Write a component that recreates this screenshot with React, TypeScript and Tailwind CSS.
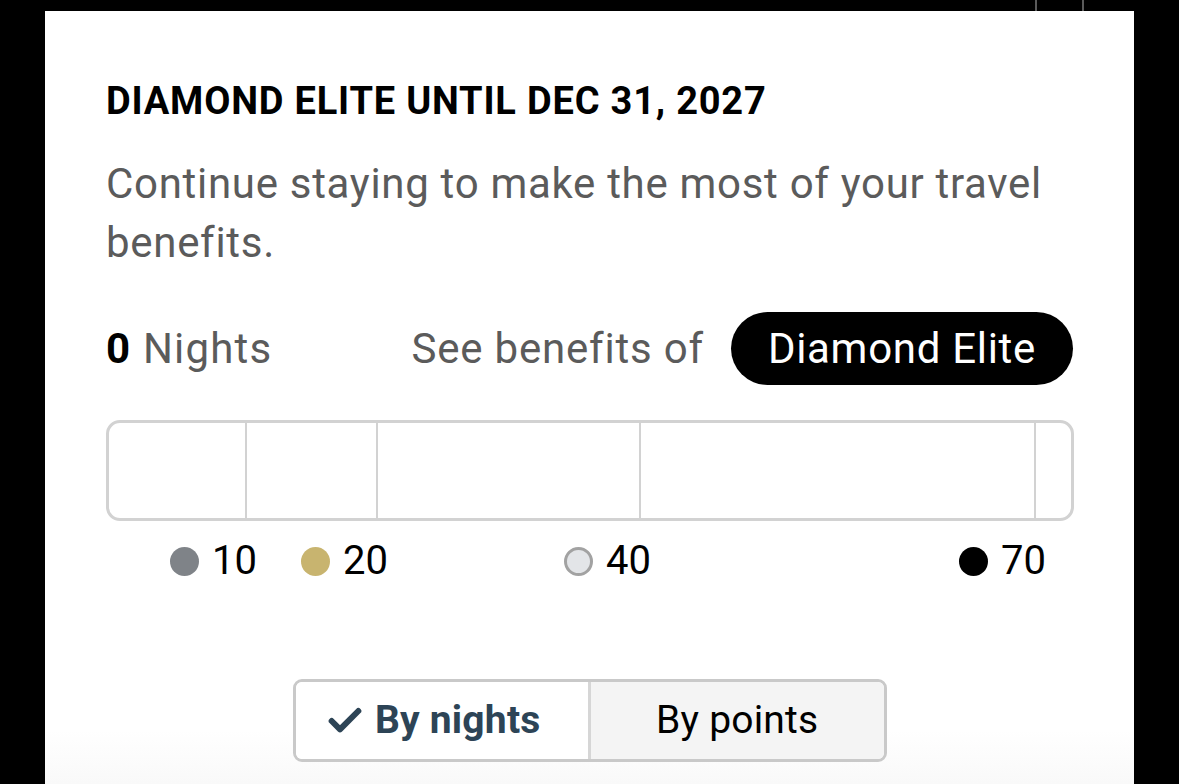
import { Check } from 'lucide-react'

const font = { fontFamily: 'Roboto, "Noto Sans", sans-serif' }

// marks on the progress bar, in px from the bar's inner left edge
const segments = [
  { width: 138, value: 10, dot: 'bg-[#7f8388]' },
  { width: 131, value: 20, dot: 'bg-[#c8b46f]' },
  { width: 263, value: 40, dot: 'bg-[#e3e5e8] border-[3px] border-[#a2a2a2]' },
  { width: 395, value: 70, dot: 'bg-black' },
]

export default function App() {
  return (
    <div className="flex h-[784px] w-[1179px] flex-col overflow-hidden bg-black" style={font}>
      {/* edge of the element behind the card */}
      <div className="flex h-[11px] shrink-0">
        <div className="w-[1035px]" />
        <div className="h-full w-[2px] bg-[#5a5a5a]" />
        <div className="w-[45px]" />
        <div className="h-full w-[2px] bg-[#5a5a5a]" />
      </div>

      <div className="ml-[45px] flex w-[1089px] flex-1 flex-col bg-gradient-to-b from-white from-[93%] to-[#f9f9f9] px-[61px] pt-[73px]">
        <h2 className="text-[38px] font-bold uppercase leading-[34px] tracking-[0.8px] text-black">
          Diamond Elite until Dec 31, 2027
        </h2>
        <p className="mt-[36px] pr-[10px] text-[42px] leading-[59px] tracking-[0.7px] text-[#5b5b5b]">
          Continue staying to make the most of your travel benefits.
        </p>

        <div className="mt-[40px] flex items-center justify-between">
          <div className="text-[42px] tracking-[1.2px] text-[#5b5b5b]">
            <span className="font-bold text-black">0</span> Nights
          </div>
          <div className="flex items-center gap-[27px]">
            <span className="text-[42px] tracking-[0.8px] text-[#5b5b5b]">See benefits of</span>
            <span className="flex h-[73px] items-center rounded-full bg-black px-[37px] text-[42px] tracking-[0.7px] text-white">
              Diamond Elite
            </span>
          </div>
        </div>

        {/* progress bar */}
        <div className="mt-[35px] flex h-[101px] w-[968px] rounded-[14px] border-[3px] border-[#d2d2d2]">
          {segments.map(s => (
            <div key={s.value} className="h-full shrink-0 border-r-2 border-[#d2d2d2]" style={{ width: s.width }} />
          ))}
        </div>

        {/* legend */}
        <div className="mt-[20px] flex">
          {segments.map(s => (
            <div key={s.value} className="flex shrink-0 justify-end" style={{ width: s.width }}>
              <div className="-mr-[13px] flex items-center gap-[13px] text-[40px] leading-[40px] text-black">
                <span className={`h-[29px] w-[29px] rounded-full ${s.dot}`} />
                {s.value}
              </div>
            </div>
          ))}
        </div>

        {/* mode toggle */}
        <div className="mt-[98px] flex justify-center">
          <div className="flex h-[83px] w-[594px] overflow-hidden rounded-[9px] border-[3px] border-[#c9c9c9]">
            <button className="flex w-0 flex-1 items-center justify-center bg-white text-[39px] font-bold tracking-[0.2px] text-[#2d4456]">
              <span className="mr-[18px] flex items-center gap-[10px]">
                <Check size={40} strokeWidth={3.6} />
                By nights
              </span>
            </button>
            <div className="w-[3px] bg-[#d6d6d6]" />
            <button className="flex w-0 flex-1 items-center justify-center bg-[#f4f4f4] text-[39px] tracking-[0.2px] text-black">
              By points
            </button>
          </div>
        </div>
      </div>
    </div>
  )
}
